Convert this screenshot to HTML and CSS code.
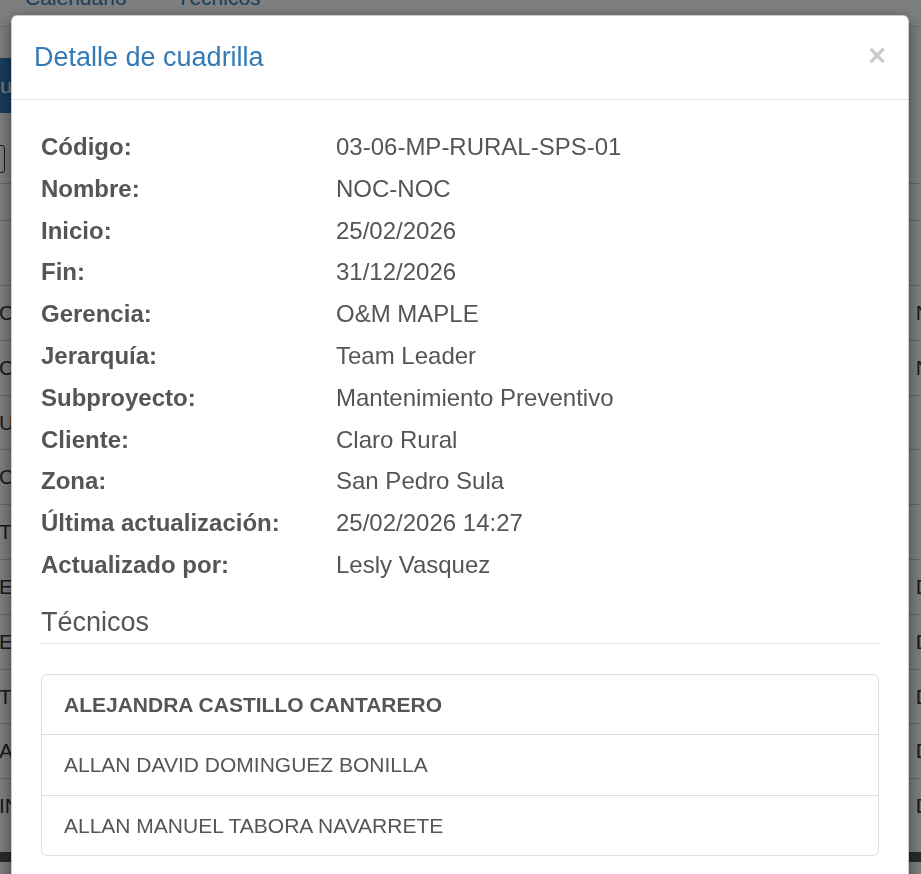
FILE: index.html
```html
<!DOCTYPE html>
<html lang="es">
<head>
<meta charset="utf-8">
<title>Detalle de cuadrilla</title>
<link rel="stylesheet" href="styles.css">
</head>
<body>
<div class="page">
  <div class="tabs">
    <span class="tab">Calendario</span>
    <span class="tab">Técnicos</span>
  </div>
  <div class="toolbar"><span class="btn-blue">Cua</span></div>
  <div class="filter"><span class="input"></span></div>
  <div class="thead"></div>
  <div class="table">
    <div class="row"><span>CU</span><span>N</span></div>
    <div class="row"><span>CA</span><span>N</span></div>
    <div class="row"><span>U</span><span></span></div>
    <div class="row"><span>C</span><span></span></div>
    <div class="row"><span>T</span><span></span></div>
    <div class="row"><span>E</span><span>D</span></div>
    <div class="row"><span>E</span><span>D</span></div>
    <div class="row"><span>T</span><span>D</span></div>
    <div class="row"><span>A</span><span>D</span></div>
    <div class="row"><span>IN</span><span>D</span></div>
  </div>
  <div class="scrollbar"></div>
</div>
<div class="backdrop"></div>
<div class="modal">
  <div class="modal-header">
    <span class="close">×</span>
    <h4 class="modal-title">Detalle de cuadrilla</h4>
  </div>
  <div class="modal-body">
    <dl class="details">
      <dt>Código:</dt><dd>03-06-MP-RURAL-SPS-01</dd>
      <dt>Nombre:</dt><dd>NOC-NOC</dd>
      <dt>Inicio:</dt><dd>25/02/2026</dd>
      <dt>Fin:</dt><dd>31/12/2026</dd>
      <dt>Gerencia:</dt><dd>O&amp;M MAPLE</dd>
      <dt>Jerarquía:</dt><dd>Team Leader</dd>
      <dt>Subproyecto:</dt><dd>Mantenimiento Preventivo</dd>
      <dt>Cliente:</dt><dd>Claro Rural</dd>
      <dt>Zona:</dt><dd>San Pedro Sula</dd>
      <dt>Última actualización:</dt><dd>25/02/2026 14:27</dd>
      <dt>Actualizado por:</dt><dd>Lesly Vasquez</dd>
    </dl>
    <h4 class="section-title">Técnicos</h4>
    <ul class="list-group">
      <li class="list-item strong">ALEJANDRA CASTILLO CANTARERO</li>
      <li class="list-item">ALLAN DAVID DOMINGUEZ BONILLA</li>
      <li class="list-item">ALLAN MANUEL TABORA NAVARRETE</li>
    </ul>
  </div>
</div>
</body>
</html>
```

FILE: styles.css
```css
html, body {
  margin: 0;
  padding: 0;
  height: 100%;
  overflow: hidden;
}
body {
  font-family: "Liberation Sans", Arial, sans-serif;
  color: #555;
  background: #fff;
}

/* background page */
.page {
  height: 874px;
  overflow: hidden;
  background: #fff;
}
.tabs {
  display: flex;
  gap: 50px;
  padding-left: 25px;
  height: 41px;
  margin-top: -15px;
  border-bottom: 1px solid #ddd;
  font-size: 21px;
  line-height: 26px;
  color: #337ab7;
}
.tabs .tab { display: block; }
.toolbar {
  padding-top: 31px;
  height: 55px;
}
.btn-blue {
  display: inline-block;
  width: 80px;
  height: 55px;
  line-height: 55px;
  margin-left: -35px;
  padding: 0 20px;
  background: #2f7ab8;
  color: #fff;
  font-size: 21px;
  border-radius: 4px;
}
.filter {
  padding-top: 32px;
  height: 28px;
}
.input {
  display: block;
  width: 20px;
  height: 26px;
  margin-left: -17px;
  border: 1px solid #333;
  border-radius: 3px;
}
.thead {
  margin-top: 10px;
  height: 36px;
  border-top: 1px solid #ccc;
  border-bottom: 1px solid #ccc;
}
.table {
  margin-top: 64px;
}
.row {
  display: flex;
  justify-content: space-between;
  height: 53.8px;
  line-height: 53.8px;
  border-top: 1px solid #ccc;
  font-size: 21px;
  color: #333;
  margin-left: -1px;
  margin-right: -10px;
}
.scrollbar {
  margin-top: 19px;
  height: 10px;
  background: #555;
}

.backdrop {
  position: fixed;
  inset: 0;
  background: rgba(0, 0, 0, 0.5);
}

/* modal */
.modal {
  position: absolute;
  left: 11px;
  top: 15px;
  width: 898px;
  box-sizing: border-box;
  background: #fff;
  border: 1px solid rgba(0, 0, 0, 0.2);
  border-radius: 6px;
  box-shadow: 0 5px 15px rgba(0, 0, 0, 0.5);
}
.modal-header {
  padding: 22px;
  border-bottom: 1px solid #e5e5e5;
}
.modal-title {
  margin: 0;
  font-size: 27px;
  font-weight: normal;
  line-height: 39px;
  color: #337ab7;
}
.close {
  float: right;
  font-size: 31px;
  font-weight: bold;
  line-height: 1;
  color: #000;
  opacity: 0.2;
  margin-top: 2px;
}
.modal-body {
  padding: 26px 29px 30px 29px;
}
.details {
  display: grid;
  grid-template-columns: 295px 1fr;
  margin: 0;
  font-size: 24px;
  line-height: 41.8px;
}
.details dt {
  font-weight: bold;
  margin: 0;
}
.details dd {
  margin: 0;
}
.section-title {
  margin: 21px 0 0 0;
  font-size: 27px;
  font-weight: normal;
  line-height: 30px;
  padding-bottom: 6px;
  border-bottom: 1px solid #e5e5e5;
}
.list-group {
  list-style: none;
  margin: 30px 0 0 0;
  padding: 0;
  border: 1px solid #ddd;
  border-radius: 6px;
}
.list-item {
  padding: 15px 22px;
  font-size: 21px;
  line-height: 29.5px;
}
.list-item + .list-item {
  border-top: 1px solid #ddd;
}
.list-item.strong {
  font-weight: bold;
}
```
